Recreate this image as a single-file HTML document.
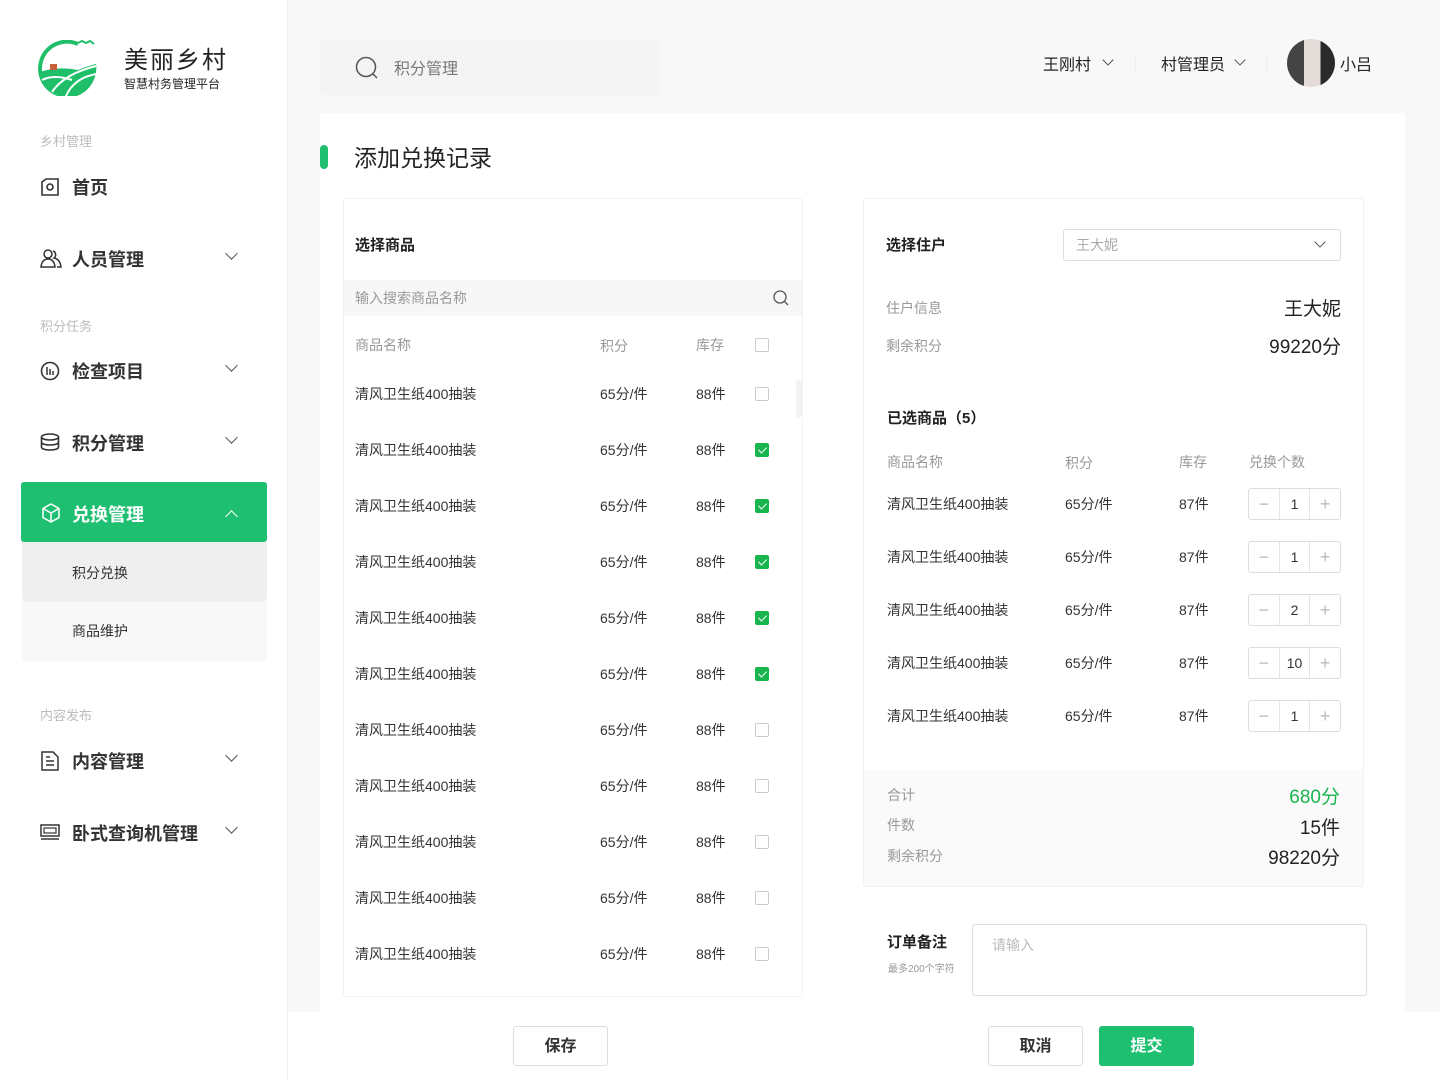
<!DOCTYPE html>
<html><head><meta charset="utf-8">
<style>
*{margin:0;padding:0;box-sizing:border-box}
body{width:1440px;height:1080px;overflow:hidden;background:#f8f8f8;font-family:"Liberation Sans","Noto Sans CJK SC",sans-serif;color:#333;position:relative}
.a{position:absolute;white-space:nowrap}
.side{position:absolute;left:0;top:0;width:288px;height:1080px;background:#fff;border-right:1px solid #eee}
.sec{font-size:13px;color:#bbb}
.nav{font-size:18px;color:#333;font-weight:bold}
.chev{position:absolute;width:9px;height:9px;border-right:1.5px solid #555;border-bottom:1.5px solid #555;transform:rotate(45deg)}
.t14{font-size:14px;color:#333}
.g{color:#999}
.cb{position:absolute;width:14px;height:14px;border:1px solid #ccc;border-radius:2px;background:#fff}
.cb.on{background:#19b54f;border-color:#19b54f}
.cb.on:after{content:"";position:absolute;left:4px;top:1px;width:4px;height:7px;border-right:1.5px solid #fff;border-bottom:1.5px solid #fff;transform:rotate(45deg)}
.step{position:absolute;width:93px;height:32px;border:1px solid #ddd;border-radius:3px;background:#fff;display:flex}
.step span{flex:1;text-align:center;line-height:30px;font-size:14px;color:#333}
.step span:first-child,.step span:last-child{color:#bbb;font-size:18px}
.step span:nth-child(2){border-left:1px solid #e5e5e5;border-right:1px solid #e5e5e5}
.btn{position:absolute;height:40px;width:95px;border:1px solid #ddd;border-radius:3px;background:#fff;text-align:center;line-height:38px;font-size:16px;font-weight:bold;color:#333}
</style></head><body>
<div class="side">
 <svg class="a" style="left:38px;top:40px" width="60" height="56" viewBox="0 0 60 56">
  <path d="M40 4 A27 27 0 1 0 56 30" fill="none" stroke="#1fbf6a" stroke-width="4"/>
  <path d="M2 32 Q20 26 40 30 Q50 26 58 24 A28 28 0 0 1 30 56 A28 28 0 0 1 2 32Z" fill="#1fbf6a"/>
  <path d="M14 52 Q26 34 58 26 M28 56 Q36 38 58 34 M4 40 Q16 34 34 40" fill="none" stroke="#fff" stroke-width="2"/>
  <rect x="12" y="24" width="7" height="6" fill="#c8623c"/>
  <path d="M40 3 l4 -2 4 2 4 -2 4 3" fill="none" stroke="#1fbf6a" stroke-width="2"/>
 </svg>
 <div class="a" style="left:124px;top:40px;font-size:24px;color:#222;letter-spacing:2px">美丽乡村</div>
 <div class="a" style="left:124px;top:75px;font-size:12px;color:#222">智慧村务管理平台</div>
 <div class="a sec" style="left:40px;top:131px">乡村管理</div>
 <svg class="a" style="left:40px;top:177px" width="20" height="20" viewBox="0 0 20 20"><path d="M2 5 L6 2 H18 V18 H2Z" fill="none" stroke="#333" stroke-width="1.6"/><circle cx="10" cy="10" r="3" fill="none" stroke="#333" stroke-width="1.6"/></svg>
 <div class="a nav" style="left:72px;top:174px">首页</div>
 <svg class="a" style="left:40px;top:248px" width="22" height="20" viewBox="0 0 22 20"><circle cx="8" cy="6" r="4" fill="none" stroke="#333" stroke-width="1.5"/><path d="M1 19 Q2 11 8 11 Q14 11 15 19Z M13 3 A4 4 0 0 1 14 10 Q20 11 21 19 H17" fill="none" stroke="#333" stroke-width="1.5"/></svg>
 <div class="a nav" style="left:72px;top:246px">人员管理</div>
 <div class="chev" style="left:227px;top:249px"></div>
 <div class="a sec" style="left:40px;top:316px">积分任务</div>
 <svg class="a" style="left:40px;top:361px" width="20" height="20" viewBox="0 0 20 20"><circle cx="10" cy="10" r="8.5" fill="none" stroke="#333" stroke-width="1.6"/><path d="M7 6v8M10 8v6M13 10v4" stroke="#333" stroke-width="1.5"/></svg>
 <div class="a nav" style="left:72px;top:358px">检查项目</div>
 <div class="chev" style="left:227px;top:361px"></div>
 <svg class="a" style="left:40px;top:433px" width="20" height="18" viewBox="0 0 20 18"><ellipse cx="10" cy="4" rx="8.5" ry="3" fill="none" stroke="#333" stroke-width="1.6"/><path d="M1.5 4v10c0 2 4 3 8.5 3s8.5-1 8.5-3V4M1.5 9c0 2 4 3 8.5 3s8.5-1 8.5-3" fill="none" stroke="#333" stroke-width="1.6"/></svg>
 <div class="a nav" style="left:72px;top:430px">积分管理</div>
 <div class="chev" style="left:227px;top:433px"></div>
 <div class="a" style="left:21px;top:482px;width:246px;height:60px;background:#1fbf72;border-radius:3px"></div>
 <svg class="a" style="left:41px;top:503px" width="20" height="20" viewBox="0 0 20 20"><path d="M10 1 L18 5.5 V14.5 L10 19 L2 14.5 V5.5Z M2 5.5 L10 10 L18 5.5 M10 10 V19" fill="none" stroke="#fff" stroke-width="1.5"/></svg>
 <div class="a nav" style="left:72px;top:501px;color:#fff">兑换管理</div>
 <div class="chev" style="left:227px;top:512px;border-color:#fff;transform:rotate(225deg)"></div>
 <div class="a" style="left:22px;top:542px;width:245px;height:120px;background:#f8f8f8;border-radius:0 0 6px 6px"></div>
 <div class="a" style="left:22px;top:542px;width:245px;height:60px;background:#efefef;border-radius:0 0 6px 6px"></div>
 <div class="a t14" style="left:72px;top:563px">积分兑换</div>
 <div class="a t14" style="left:72px;top:621px">商品维护</div>
 <div class="a sec" style="left:40px;top:705px">内容发布</div>
 <svg class="a" style="left:41px;top:751px" width="18" height="20" viewBox="0 0 18 20"><path d="M1 1 H12 L17 6 V19 H1Z M5 10 H13 M5 14 H13 M5 6 H9" fill="none" stroke="#333" stroke-width="1.5"/></svg>
 <div class="a nav" style="left:72px;top:748px">内容管理</div>
 <div class="chev" style="left:227px;top:751px"></div>
 <svg class="a" style="left:40px;top:824px" width="20" height="16" viewBox="0 0 20 16"><rect x="1" y="1" width="18" height="11" fill="none" stroke="#333" stroke-width="1.5"/><rect x="4" y="4" width="12" height="5" fill="none" stroke="#333" stroke-width="1.2"/><path d="M1 15 H19" stroke="#333" stroke-width="1.5"/></svg>
 <div class="a nav" style="left:72px;top:820px">卧式查询机管理</div>
 <div class="chev" style="left:227px;top:823px"></div>
</div>

<!-- header -->
<div class="a" style="left:320px;top:39px;width:340px;height:56px;background:#f4f4f4;border-radius:3px"></div>
<svg class="a" style="left:355px;top:56px" width="24" height="24" viewBox="0 0 24 24"><circle cx="11" cy="11" r="9.5" fill="none" stroke="#555" stroke-width="1.5"/><path d="M18 18 L22 22" stroke="#555" stroke-width="1.5"/></svg>
<div class="a" style="left:394px;top:55px;font-size:16px;color:#777">积分管理</div>
<div class="a" style="left:1043px;top:51px;font-size:16px;color:#222">王刚村</div>
<div class="chev" style="left:1104px;top:56px;width:8px;height:8px"></div>
<div class="a" style="left:1135px;top:53px;width:1px;height:22px;background:#eee"></div>
<div class="a" style="left:1161px;top:51px;font-size:16px;color:#222">村管理员</div>
<div class="chev" style="left:1236px;top:56px;width:8px;height:8px"></div>
<div class="a" style="left:1266px;top:53px;width:1px;height:22px;background:#eee"></div>
<div class="a" style="left:1287px;top:39px;width:48px;height:48px;border-radius:50%;overflow:hidden;background:linear-gradient(90deg,#444 0 35%,#e4dcd8 35% 70%,#2a2a2a 70%)"></div>
<div class="a" style="left:1340px;top:51px;font-size:16px;color:#222">小吕</div>

<!-- main card -->
<div class="a" style="left:320px;top:113px;width:1085px;height:900px;background:#fff"></div>
<div class="a" style="left:320px;top:145px;width:8px;height:24px;background:#1fbf72;border-radius:4px"></div>
<div class="a" style="left:354px;top:139px;font-size:23px;color:#222">添加兑换记录</div>

<!-- left panel -->
<div class="a" style="left:343px;top:198px;width:460px;height:799px;border:1px solid #f2f2f2;border-radius:3px"></div>
<div class="a" style="left:355px;top:234px;font-size:15px;color:#222;font-weight:bold">选择商品</div>
<div class="a" style="left:344px;top:280px;width:458px;height:36px;background:#f7f7f7"></div>
<div class="a" style="left:355px;top:288px;font-size:14px;color:#999">输入搜索商品名称</div>
<svg class="a" style="left:772px;top:289px" width="18" height="18" viewBox="0 0 18 18"><circle cx="8" cy="8" r="6" fill="none" stroke="#555" stroke-width="1.3"/><path d="M12.5 12.5 L16 16" stroke="#555" stroke-width="1.3"/></svg>
<div class="a t14 g" style="left:355px;top:335px">商品名称</div>
<div class="a t14 g" style="left:600px;top:336px">积分</div>
<div class="a t14 g" style="left:696px;top:335px">库存</div>
<div class="cb" style="left:755px;top:338px"></div>
<div class="a" style="left:796px;top:380px;width:6px;height:38px;background:#f3f3f3;border-radius:3px"></div>

<div id="rows"></div>

<!-- right panel -->
<div class="a" style="left:863px;top:198px;width:501px;height:689px;border:1px solid #f2f2f2;border-radius:3px"></div>
<div class="a" style="left:886px;top:234px;font-size:15px;color:#222;font-weight:bold">选择住户</div>
<div class="a" style="left:1063px;top:229px;width:278px;height:32px;border:1px solid #ddd;border-radius:3px"></div>
<div class="a" style="left:1076px;top:235px;font-size:14px;color:#aaa">王大妮</div>
<div class="chev" style="left:1316px;top:238px;width:8px;height:8px"></div>
<div class="a t14 g" style="left:886px;top:298px">住户信息</div>
<div class="a" style="right:99px;top:294px;font-size:19px;color:#222">王大妮</div>
<div class="a t14 g" style="left:886px;top:336px">剩余积分</div>
<div class="a" style="right:99px;top:332px;font-size:19px;color:#222">99220分</div>
<div class="a" style="left:887px;top:407px;font-size:15px;color:#222;font-weight:bold">已选商品（5）</div>
<div class="a t14 g" style="left:887px;top:452px">商品名称</div>
<div class="a t14 g" style="left:1065px;top:453px">积分</div>
<div class="a t14 g" style="left:1179px;top:452px">库存</div>
<div class="a t14 g" style="left:1249px;top:452px">兑换个数</div>
<div id="rows2"></div>

<div class="a" style="left:864px;top:770px;width:499px;height:116px;background:#fafafa"></div>
<div class="a t14 g" style="left:887px;top:785px">合计</div>
<div class="a" style="right:100px;top:782px;font-size:19px;color:#19b54f">680分</div>
<div class="a t14 g" style="left:887px;top:815px">件数</div>
<div class="a" style="right:100px;top:813px;font-size:19px;color:#222">15件</div>
<div class="a t14 g" style="left:887px;top:846px">剩余积分</div>
<div class="a" style="right:100px;top:843px;font-size:19px;color:#222">98220分</div>

<div class="a" style="left:887px;top:931px;font-size:15px;color:#222;font-weight:bold">订单备注</div>
<div class="a" style="left:888px;top:960px;font-size:10px;color:#999">最多200个字符</div>
<div class="a" style="left:972px;top:924px;width:395px;height:72px;border:1px solid #ddd;border-radius:3px;background:#fff"></div>
<div class="a t14" style="left:992px;top:935px;color:#bbb">请输入</div>

<!-- bottom bar -->
<div class="a" style="left:288px;top:1012px;width:1152px;height:68px;background:#fff"></div>
<div class="btn" style="left:513px;top:1026px;line-height:40px">保存</div>
<div class="btn" style="left:988px;top:1026px;line-height:40px">取消</div>
<div class="btn" style="left:1099px;top:1026px;background:#1fbf72;border-color:#1fbf72;color:#fff;line-height:40px">提交</div>

<script>
var h='';var on=[0,1,1,1,1,1,0,0,0,0,0];
for(var i=0;i<11;i++){var y=384+i*56;
h+='<div class="a t14" style="left:355px;top:'+y+'px">清风卫生纸400抽装</div><div class="a t14" style="left:600px;top:'+y+'px">65分/件</div><div class="a t14" style="left:696px;top:'+y+'px">88件</div><div class="cb'+(on[i]?' on':'')+'" style="left:755px;top:'+(y+3)+'px"></div>';}
document.getElementById('rows').outerHTML=h;
var q=[1,1,2,10,1],g='';
for(var j=0;j<5;j++){var y2=494+j*53;
g+='<div class="a t14" style="left:887px;top:'+y2+'px">清风卫生纸400抽装</div><div class="a t14" style="left:1065px;top:'+y2+'px">65分/件</div><div class="a t14" style="left:1179px;top:'+y2+'px">87件</div><div class="step" style="left:1248px;top:'+(y2-6)+'px"><span>−</span><span>'+q[j]+'</span><span>+</span></div>';}
document.getElementById('rows2').outerHTML=g;
</script>
</body></html>
